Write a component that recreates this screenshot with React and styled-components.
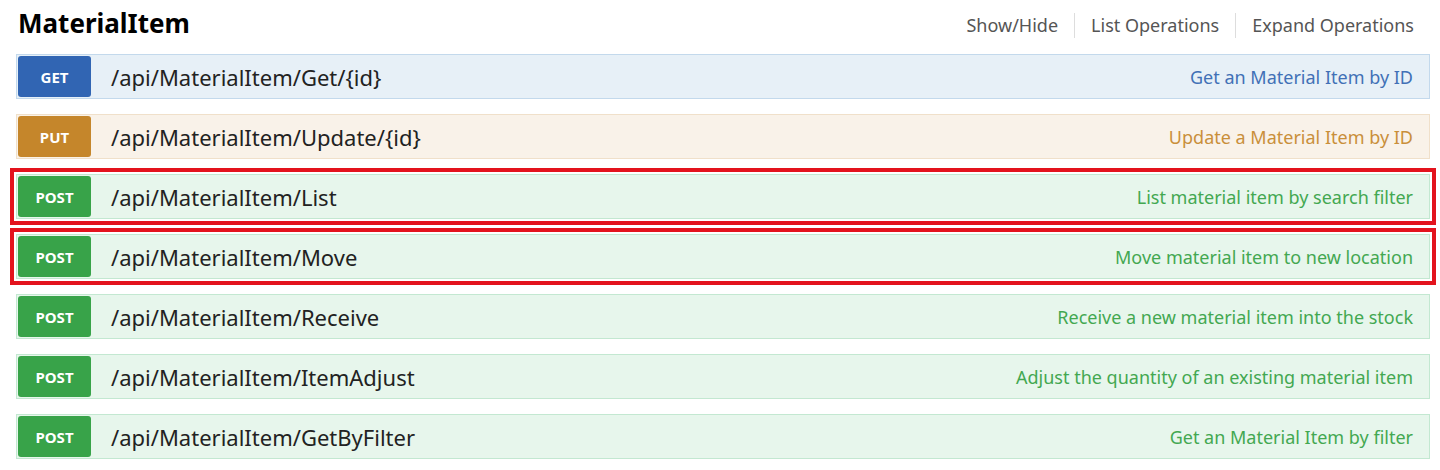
import React from 'react';
import styled, { createGlobalStyle } from 'styled-components';

const GlobalStyle = createGlobalStyle`
  html, body {
    margin: 0;
    padding: 0;
    background: #ffffff;
  }
  body {
    font-family: 'Noto Sans', 'Open Sans', 'DejaVu Sans', sans-serif;
  }
`;

const METHODS = {
  get: { badge: '#3165b3', bg: '#e7f0f7', border: '#c3d9ec', text: '#4170b6' },
  put: { badge: '#c5862b', bg: '#f9f2e9', border: '#f0e0ca', text: '#c98f3a' },
  post: { badge: '#38a349', bg: '#e7f6ec', border: '#c3e8d1', text: '#43a851' },
};

const operations = [
  { method: 'get', path: '/api/MaterialItem/Get/{id}', summary: 'Get an Material Item by ID' },
  { method: 'put', path: '/api/MaterialItem/Update/{id}', summary: 'Update a Material Item by ID' },
  { method: 'post', path: '/api/MaterialItem/List', summary: 'List material item by search filter', marked: true },
  { method: 'post', path: '/api/MaterialItem/Move', summary: 'Move material item to new location', marked: true },
  { method: 'post', path: '/api/MaterialItem/Receive', summary: 'Receive a new material item into the stock' },
  { method: 'post', path: '/api/MaterialItem/ItemAdjust', summary: 'Adjust the quantity of an existing material item' },
  { method: 'post', path: '/api/MaterialItem/GetByFilter', summary: 'Get an Material Item by filter' },
];

const Resource = styled.section`
  padding: 0 10px 0 16px;
`;

const Heading = styled.div`
  display: flex;
  align-items: center;
  justify-content: space-between;
  height: 54px;
`;

const Title = styled.h2`
  margin: 0 0 8px 2px;
  font-size: 26px;
  font-weight: 700;
  color: #000;
`;

const Options = styled.ul`
  display: flex;
  align-items: center;
  list-style: none;
  margin: 0 0 4px 0;
  padding: 0;
`;

const Option = styled.li`
  padding: 0 16px;
  font-size: 18px;
  line-height: 25px;
  color: #555;
  border-right: 1px solid #dddddd;

  &:last-child {
    border-right: none;
  }
`;

const List = styled.div`
  display: flex;
  flex-direction: column;
  gap: 15px;
`;

const Row = styled.div`
  display: flex;
  align-items: center;
  height: 45px;
  box-sizing: border-box;
  padding: 1px;
  background: ${(p) => METHODS[p.$method].bg};
  border: 1px solid ${(p) => METHODS[p.$method].border};
  outline: ${(p) => (p.$marked ? '4px solid #e3131d' : 'none')};
  outline-offset: 2px;
`;

const Badge = styled.span`
  display: flex;
  align-items: center;
  justify-content: center;
  width: 73px;
  height: 100%;
  border-radius: 3px;
  background: ${(p) => METHODS[p.$method].badge};
  color: #fff;
  font-size: 15px;
  font-weight: 700;
  text-transform: uppercase;
`;

const Path = styled.span`
  margin-left: 20px;
  font-size: 22px;
  color: #222;
`;

const Summary = styled.span`
  margin-left: auto;
  margin-right: 15px;
  font-size: 18px;
  color: ${(p) => METHODS[p.$method].text};
`;

export default function App() {
  return (
    <>
      <GlobalStyle />
      <Resource>
        <Heading>
          <Title>MaterialItem</Title>
          <Options>
            <Option>Show/Hide</Option>
            <Option>List Operations</Option>
            <Option>Expand Operations</Option>
          </Options>
        </Heading>
        <List>
          {operations.map((op) => (
            <Row key={op.path} $method={op.method} $marked={op.marked}>
              <Badge $method={op.method}>{op.method}</Badge>
              <Path>{op.path}</Path>
              <Summary $method={op.method}>{op.summary}</Summary>
            </Row>
          ))}
        </List>
      </Resource>
    </>
  );
}
